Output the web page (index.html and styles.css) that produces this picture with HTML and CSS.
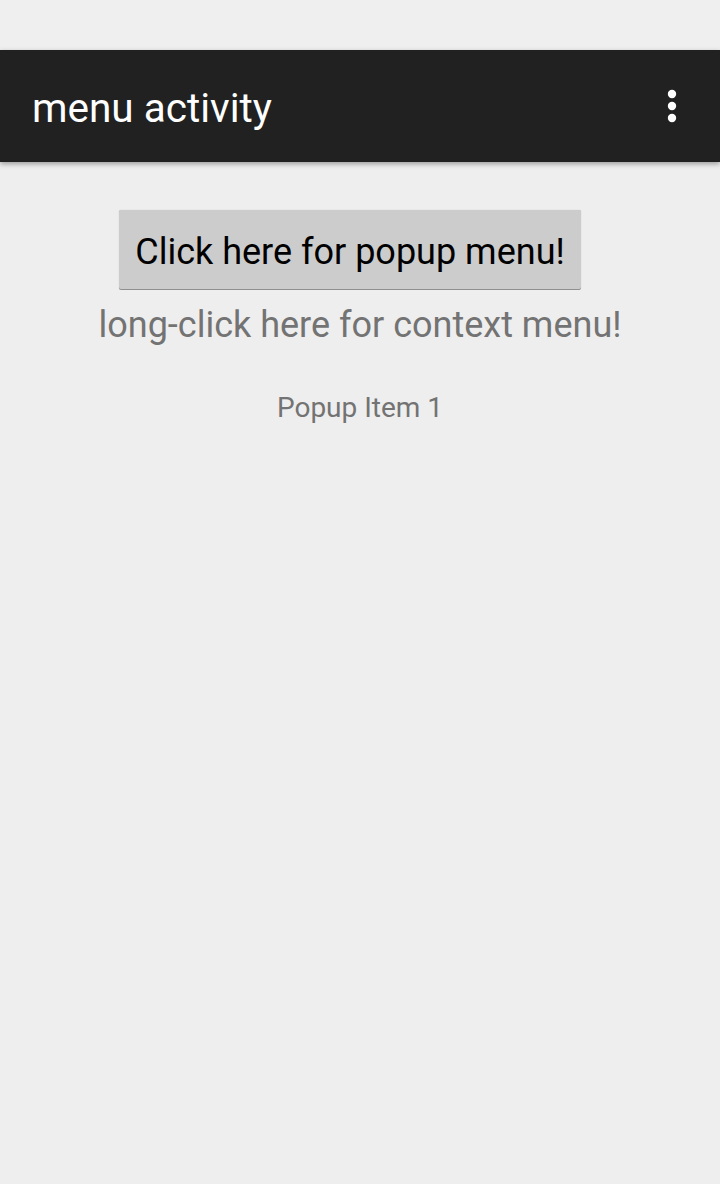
FILE: index.html
```html
<!DOCTYPE html>
<html>
<head>
<meta charset="utf-8">
<link rel="stylesheet" href="styles.css">
</head>
<body>
<div class="status"></div>
<header class="appbar">
  <span class="title">menu activity</span>
  <svg class="overflow" width="12" height="36" viewBox="0 0 12 36">
    <circle cx="6" cy="6" r="4.2" fill="#fff"/>
    <circle cx="6" cy="18" r="4.2" fill="#fff"/>
    <circle cx="6" cy="30" r="4.2" fill="#fff"/>
  </svg>
</header>
<main class="content">
  <button class="btn">Click here for popup menu!</button>
  <div class="longclick">long-click here for context menu!</div>
  <div class="result">Popup Item 1</div>
</main>
</body>
</html>
```
FILE: styles.css
```css
html, body {
  margin: 0;
  padding: 0;
  background: #eeeeee;
  font-family: Roboto, "Noto Sans", sans-serif;
}
.status {
  height: 50px;
  background: #efefef;
}
.appbar {
  height: 112px;
  background: #212121;
  display: flex;
  align-items: center;
  justify-content: space-between;
  padding: 0 42px 0 32px;
  box-shadow: 0 2px 5px rgba(0,0,0,0.35);
  position: relative;
}
.title {
  color: #ffffff;
  font-size: 40.5px;
  line-height: 48px;
  margin-top: 4px;
}
.overflow {
  display: block;
}
.content {
  display: flex;
  flex-direction: column;
  align-items: center;
  padding-top: 48px;
}
.btn {
  font-family: Roboto, "Noto Sans", sans-serif;
  font-size: 36px;
  color: #000;
  background: #cccccc;
  border: none;
  border-radius: 2px;
  box-shadow: 0 1px 0 #8f8f8f, 0 0 1px rgba(0,0,0,0.25);
  width: 462px;
  height: 79px;
  padding: 4px 0 0;
  margin: 0 20px 0 0;
}
.longclick {
  font-size: 36px;
  line-height: 48px;
  color: #737373;
  margin-top: 12px;
}
.result {
  font-size: 28px;
  line-height: 34px;
  color: #737373;
  margin-top: 42px;
}
```
